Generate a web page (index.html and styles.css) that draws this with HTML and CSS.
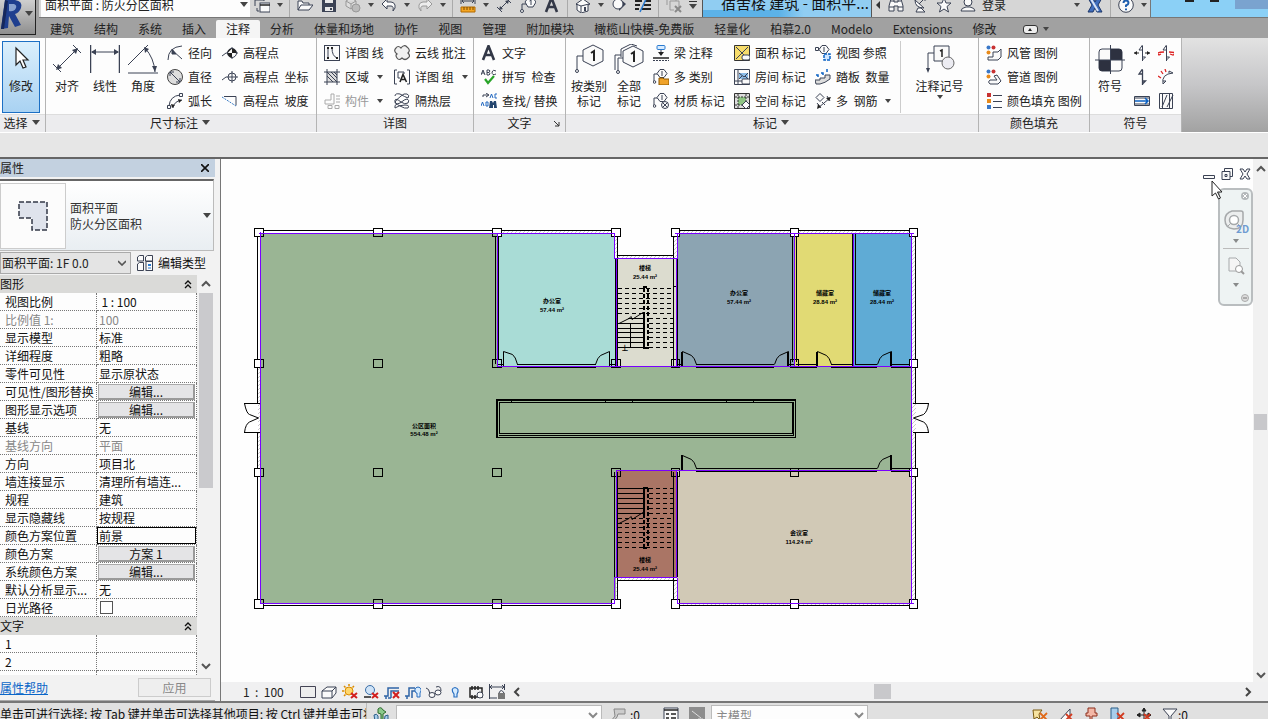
FILE: index.html
```
<!DOCTYPE html>
<html lang="zh-CN">
<head>
<meta charset="utf-8">
<title>面积平面</title>
<link rel="stylesheet" href="styles.css">
</head>
<body>
<svg class="defs" aria-hidden="true">
  <symbol id="i-switch" viewBox="0 0 16 16"><path d="M1 9V1h9v3M1 3h9M3 11v3h2" class="k"/><rect x="6" y="6" width="10" height="9" class="w"/><path d="M6 8h10" class="k2"/></symbol>
  <symbol id="i-open" viewBox="0 0 16 16"><path d="M1 13V4h4l1 2h6v2M1 13l3-5h12l-4 5z" class="w"/></symbol>
  <symbol id="i-save" viewBox="0 0 16 16"><path d="M1 1h12l2 2v12H1z" fill="#3b4254"/><path d="M4 1h8v5H4zM4 10h8v4H4z" fill="#e8e8e8"/><path d="M9 11h2v2H9z" fill="#3b4254"/></symbol>
  <symbol id="i-cube" viewBox="0 0 16 16"><path d="M1 4l5-3 5 3v5l-5 3-5-3zM1 4l5 3 5-3M6 7v5" fill="#ddd" stroke="#999"/><circle cx="11" cy="11" r="4" fill="#bbb" stroke="#999"/></symbol>
  <symbol id="i-undo" viewBox="0 0 16 16"><path d="M6 2L1 7l5 5V9h4q3 0 2 5 3-3 2-6-1-3-4-3H6z" class="w"/></symbol>
  <symbol id="i-redo" viewBox="0 0 16 16"><path d="M10 2l5 5-5 5V9H6q-3 0-2 5-3-3-2-6 1-3 4-3h4z" fill="#eee" stroke="#999"/></symbol>
  <symbol id="i-ruler" viewBox="0 0 16 16"><path d="M1 1v6M15 1v6M2 4h12M4 2L2 4l2 2M12 2l2 2-2 2" class="k"/><path d="M1 10h14v5H1z" fill="#f5a623" stroke="#b36b00"/><path d="M4 10v3M7 10v3M10 10v3M13 10v3" stroke="#7a4a00"/></symbol>
  <symbol id="i-diag" viewBox="0 0 16 16"><path d="M3 13L13 3M1 10l5 5M10 1l5 5" class="k"/><path d="M3 13l1-4 3 3zM13 3l-4 1 3 3z" fill="#3b4254"/></symbol>
  <symbol id="i-tag" viewBox="0 0 16 16"><path d="M2 14V7h4" class="k"/><circle cx="2" cy="14" r="1.5" class="w"/><path d="M8 1h5l3 4-3 5H8L5 5z" class="w"/><path d="M9.500 4l1.500-1v5" class="k"/></symbol>
  <symbol id="i-house" viewBox="0 0 16 16"><path d="M1 7l7-5 7 5-2 1v6l-7 2-4-3V8z" class="w"/><path d="M1 7l5 2 8-2M6 9v6" class="k"/><path d="M9 10h2v4H9z" fill="#3b4254"/></symbol>
  <symbol id="i-sect" viewBox="0 0 16 16"><path d="M8 1l7 6-7 7z" fill="#3b4254"/><circle cx="7" cy="7" r="5" class="w"/></symbol>
  <symbol id="i-lines" viewBox="0 0 16 16"><path d="M0 4h7M10 4h6M0 8h5M9 8h7M0 12h4M7 12h9" stroke="#222" stroke-width="2"/><path d="M12 0L5 15" stroke="#2a7bd0" stroke-width="1.500"/></symbol>
  <symbol id="i-closew" viewBox="0 0 16 16"><path d="M1 8V1h9v3M4 4h9v6M4 4v9h4" fill="none" stroke="#999"/><path d="M9 9l6 6M15 9l-6 6" stroke="#888" stroke-width="2"/></symbol>
  <symbol id="i-bino" viewBox="0 0 16 16"><path d="M3 2h3v3h4V2h3l2 7v5h-5V9H6v5H1V9z" class="w"/><path d="M3 4h3M10 4h3M1 10h5M10 10h5" class="k"/></symbol>
  <symbol id="i-dish" viewBox="0 0 16 16"><path d="M3 3q0 8 9 8zM7 7l5-5M4 15h9l-4-4-3 0z" class="w"/><circle cx="13" cy="2" r="1.500" fill="#3b4254"/></symbol>
  <symbol id="i-star" viewBox="0 0 16 16"><path d="M8 1l2 5h5l-4 3.500 1.500 5.500L8 12l-4.500 3L5 9.500 1 6h5z" class="w"/></symbol>
  <symbol id="i-user" viewBox="0 0 16 16"><circle cx="8" cy="5" r="4" class="w"/><path d="M1 14q0-3 5-4h4q5 1 5 4z" class="w"/></symbol>
  <symbol id="i-x" viewBox="0 0 16 16"><path d="M1 1h5l2 4 2-4h5l-4 7 4 7h-5l-2-4-2 4H1l4-7z" fill="#3f6dbd" stroke="#1d3769"/><path d="M4 2l7 12" stroke="#d7e3f6" stroke-width="2"/></symbol>
  <symbol id="i-help" viewBox="0 0 16 16"><circle cx="8" cy="8" r="7.300" class="w"/><path d="M5.500 6q0-2.500 2.500-2.500T10.500 6Q10.500 7.500 8 8.500V10M8 11.500v1.700" fill="none" stroke="#1f5fae" stroke-width="2"/></symbol>
  <symbol id="i-a" viewBox="0 0 16 16"><path d="M2 15L7.500 1 13 15M4 10h7" fill="none" stroke="#333847" stroke-width="2.600"/></symbol>
  <symbol id="b-cursor" viewBox="0 0 30 30"><path d="M10 4v17l4-4 3 7 3-1-3-7h5z" fill="#fff" stroke="#222" stroke-width="1.200"/></symbol>
  <symbol id="b-align" viewBox="0 0 30 30"><path d="M5 25L25 5M1 20l8 8M21 1l8 8" class="k"/><path d="M4 26l2-6 4 4zM26 4l-6 2 4 4z" fill="#3b4254"/></symbol>
  <symbol id="b-linear" viewBox="0 0 30 30"><path d="M0.500 1v28M29.500 1v28" stroke="#3b4254" stroke-width="1.500"/><path d="M2 8h26" class="k"/><path d="M1 8l5-3v6zM29 8l-5-3v6z" fill="#3b4254"/></symbol>
  <symbol id="b-angle" viewBox="0 0 30 30"><path d="M0 21L20 1M0 29h30M17 4q9 10 10 24" class="k"/><path d="M16 3l5 2-4 4zM27 28l-3-6h5z" fill="#3b4254"/></symbol>
  <symbol id="b-tag" viewBox="0 0 30 30"><path d="M3 27V12h7" class="k"/><circle cx="3" cy="27" r="1.500" class="w"/><path d="M19 1l10 5v11l-10 5-10-5V6z" class="w"/><path d="M17 9l3-2v10" stroke="#222" stroke-width="2" fill="none"/></symbol>
  <symbol id="b-tags" viewBox="0 0 30 30"><path d="M1 26V11h6M7 13V5L17 0l6 2" class="k"/><path d="M4 28V14h6" class="k"/><circle cx="4" cy="28" r="1.500" class="w"/><path d="M19 2l10 5v11l-10 5-10-5V7z" class="w"/><path d="M17 10l3-2v10" stroke="#222" stroke-width="2" fill="none"/></symbol>
  <symbol id="b-keynote" viewBox="0 0 30 30"><path d="M3 26V9h6" class="k"/><path d="M3 29l-2-5h4z" fill="#3b4254"/><path d="M9 2h15v15H9z" class="w"/><path d="M15 7l2-1v7" fill="none" stroke="#222" stroke-width="1.500"/><circle cx="23" cy="19" r="6" fill="#ececf2" stroke="#666"/></symbol>
  <symbol id="b-symbol" viewBox="0 0 30 30"><rect x="4" y="5" width="23" height="22" rx="3" class="w"/><path d="M15.500 5H24q3 0 3 3v8H15.500zM4 16h11.500v11H7q-3 0-3-3z" fill="#2d3140"/><path d="M0 16h30M15.500 1v30" class="k"/></symbol>
  <symbol id="s-rad" viewBox="0 0 16 16"><path d="M1 15Q1 2 15 1" class="k"/><path d="M6 6l9 8M5 4v5h4z" fill="#3b4254" stroke="#3b4254"/></symbol>
  <symbol id="s-dia" viewBox="0 0 16 16"><circle cx="8" cy="8" r="7.500" fill="#ddd" stroke="#444"/><path d="M3 3l10 10M3 7V3h4M13 9v4H9" class="k"/></symbol>
  <symbol id="s-arc" viewBox="0 0 16 16"><path d="M2 13Q3 3 13 2M6 15q1-7 9-8" class="k"/><path d="M5 15l-1-4 4 1zM15 7l-4-1 1 4z" fill="#222"/><path d="M.5 12.500h3v3h-3zM12.500.5h3v3h-3z" class="w"/></symbol>
  <symbol id="s-spot" viewBox="0 0 16 16"><path d="M0 11l4-3h12M10 2v12" class="k"/><circle cx="10" cy="8" r="4.500" class="w"/><path d="M10 3.500A4.500 4.500 0 0 1 14.500 8H10zM10 12.500A4.500 4.500 0 0 1 5.500 8H10zM10 3.500A4.500 4.500 0 0 0 5.500 8z" fill="#222"/></symbol>
  <symbol id="s-spotc" viewBox="0 0 16 16"><circle cx="10" cy="8" r="4" class="w"/><path d="M0 11l4-3h12M10 2v12" class="k"/></symbol>
  <symbol id="s-slope" viewBox="0 0 16 16"><path d="M2 3.500h12v9" class="k"/><path d="M0 4l14 9" stroke="#3b7cc4" stroke-dasharray="2 1"/></symbol>
  <symbol id="s-detl" viewBox="0 0 16 16"><rect x=".5" y=".5" width="15" height="15" class="w"/><path d="M4 3v10M8 3q0 8 5 10" class="k"/><path d="M3 2h2v2H3zM3 12h2v2H3zM7 2h2v2H7zM12 12h2v2h-2z" fill="#222"/></symbol>
  <symbol id="s-region" viewBox="0 0 16 16"><path d="M3 3h10v10H3z" fill="#ddd"/><path d="M0 3h16M0 13h16M3 0v16M13 0v16M3 7l6 6M3 3l10 10M7 3l6 6M10 3l3 3" class="k"/></symbol>
  <symbol id="s-comp" viewBox="0 0 16 16"><path d="M7 1v6H1v4h9V1zM12 3h4M12 6h4M12 9h4M4 12.500h4v3H4zM11 12.500h4v3h-4z" fill="none" stroke="#aaa"/></symbol>
  <symbol id="s-cloud" viewBox="0 0 16 16"><path d="M3 9Q-1 6 2 3 4 0 7 3q3-4 6-1 4 3 1 6 3 3 0 5-3 3-6 0-3 3-5 0-2-3 0-4z" fill="#f0f0f0" stroke="#555" stroke-width="1.200"/></symbol>
  <symbol id="s-group" viewBox="0 0 16 16"><path d="M3 1H.5v14H3M13 1h2.500v14H13M10 5V3H4v6h2" class="k"/><path d="M6 13l3-7.500 3.500 7.500M7 10.500h4.500" fill="none" stroke="#222" stroke-width="1.600"/></symbol>
  <symbol id="s-insul" viewBox="0 0 16 16"><path d="M1 3q0-3 5-2 5 3 8 4 2-3-1-4-3-1-6 2-5 4-6 6 0 3 5 1 5-4 7-4 3 1 1 4-3 2-7-1-5-4-6-2-1 3 5 6 5 3 8 2 2-3-3-3-6 0-10 3-1-3 2-4" class="k"/></symbol>
  <symbol id="s-beam" viewBox="0 0 16 16"><rect x="4" y=".5" width="8" height="4" rx="1" fill="#d9ecff" stroke="#2a7bd0"/><path d="M8 5v5" class="k"/><path d="M5 7h6l-3 4z" fill="#222"/><path d="M0 13h16" class="k2"/><path d="M0 15.500h16" class="k" stroke-dasharray="2 1"/></symbol>
  <symbol id="s-multi" viewBox="0 0 16 16"><path d="M1 12V5h4" class="k"/><circle cx="1.500" cy="13" r="1.300" class="w"/><path d="M7 .5h4l3 4-3 4H7l-3-4z" class="w"/><path d="M9 2v5" class="k"/><path d="M6 9h4l1 1h5v6H6z" fill="#f0a32a" stroke="#8a5600"/></symbol>
  <symbol id="s-mat" viewBox="0 0 16 16"><path d="M1 12V5h4" class="k"/><circle cx="1.500" cy="13" r="1.300" class="w"/><path d="M7 .5h4l3 4-3 4H7l-3-4z" class="w"/><path d="M9 2v5" class="k"/><circle cx="12" cy="12" r="3.500" class="w"/><path d="M9.500 14.500l5-5M9.500 9.500l5 5" class="k"/></symbol>
  <symbol id="s-area" viewBox="0 0 16 16"><path d="M.5.5h15v15H.5z" fill="#f7dc6a" stroke="#333"/><path d="M2 2l12 12M14 2L2 14" class="k"/><rect x="8" y="10" width="8" height="5" rx="2" class="w"/></symbol>
  <symbol id="s-room" viewBox="0 0 16 16"><path d="M.5.5h15v15H.5zM4 1v14M1 12h8" class="w"/><path d="M5 4h9v6H5z" fill="#8cbce8"/><path d="M5 4l5 4 4-4M5 10l3-3M14 10l-3-3" class="k"/><rect x="8" y="10" width="8" height="5" rx="1" class="w"/></symbol>
  <symbol id="s-space" viewBox="0 0 16 16"><path d="M.5.5h15v15H.5z" fill="#ddd" stroke="#333"/><path d="M4 4h8v8H4z" fill="#8fc584"/><path d="M4 1v14M12 1v14M1 4h14M1 12h14" stroke="#333" stroke-dasharray="2 1"/><path d="M12 8l4 4-4 4-4-4z" class="w"/></symbol>
  <symbol id="s-vref" viewBox="0 0 16 16"><path d="M0 4h5" class="k"/><path d="M.5 2.500h3v3h-3z" class="w"/><path d="M7 .5h4l3 4-3 4H7l-3-4z" class="w"/><path d="M9 2v5" class="k"/><path d="M9 9h6v6H9z" fill="#cfe6ff" stroke="#0b62c4" stroke-width="1.500" stroke-dasharray="3 1"/></symbol>
  <symbol id="s-tread" viewBox="0 0 16 16"><path d="M0 11h5V9h5V6h5v4q-5 4-10 5H1z" fill="#ddd" stroke="#3b4254"/><path d="M1 6h2v2M6 4h2v2M12 0v3" fill="none" stroke="#0b62c4" stroke-width="1.500"/></symbol>
  <symbol id="s-rebar" viewBox="0 0 16 16"><path d="M5 .5l4 4-4 4-4-4z" class="w"/><path d="M3 15L15 5M2 10l4 5M12 3l3 5M7 9l3 3" class="k"/><path d="M2 16l1-5 3 3zM16 4l-5 1 3 3z" fill="#222"/></symbol>
  <symbol id="s-duct" viewBox="0 0 16 16"><circle cx="2.500" cy="2.500" r="2" fill="#3a78c8"/><circle cx="7.500" cy="2.500" r="2" fill="#c83232"/><circle cx="2.500" cy="7.500" r="2" fill="#e88a1a"/><path d="M7 7h5l3-3v8l-3 3H2v-3h5z" class="w"/></symbol>
  <symbol id="s-pipe" viewBox="0 0 16 16"><circle cx="2.500" cy="2.500" r="2" fill="#3a78c8"/><circle cx="7.500" cy="2.500" r="2" fill="#c83232"/><circle cx="2.500" cy="7.500" r="2" fill="#e88a1a"/><path d="M4 11h7l-3-4 3-1 4 6-3 3H4q-3-2 0-4z" class="w"/></symbol>
  <symbol id="s-fill" viewBox="0 0 16 16"><path d="M1 0h4v4H1z" fill="#c83232"/><path d="M1 6h4v4H1z" fill="#e88a1a"/><path d="M1 12h4v4H1z" fill="#3a78c8"/><path d="M7 2.500h9M7 8.500h9M7 14.500h9" class="k"/></symbol>
  <symbol id="y-1" viewBox="0 0 16 16"><path d="M8.500 16V1M8.500 0L5 5h3M8.500 15l3-3H9" class="k"/><path d="M0 8h5M11 8h5" stroke="#222"/><path d="M0 8l3-2v4zM16 8l-3-2v4z" fill="#222"/></symbol>
  <symbol id="y-2" viewBox="0 0 16 16"><path d="M8.500 16V1M8.500 0L5 5h3M8.500 15l3-3H9" class="k"/><path d="M6 7q-9 0-5 3l2-1M11 7q9 0 4 3l-3-1" fill="none" stroke="#d22" stroke-width="1.300"/></symbol>
  <symbol id="y-3" viewBox="0 0 16 16"><path d="M8.500 16V1M8.500 0L5 5h3M8.500 15l3-3H9" class="k" stroke-width="1.300"/></symbol>
  <symbol id="y-4" viewBox="0 0 16 16"><path d="M5 15q-2-10 10-11l-4-2v2M5 15l3-3H5" class="k"/><path d="M0 7l3 2M3 2l2 3M7 0l1 3" stroke="#d22" stroke-width="1.300"/></symbol>
  <symbol id="y-5" viewBox="0 0 16 16"><path d="M.5 3.500h15v9H.5zM4 3v3M8 3v3M12 3v3M4 10v3M8 10v3M12 10v3M2 3v3M6 3v3M10 3v3M14 3v3M2 10v3M6 10v3M10 10v3M14 10v3" class="w"/><path d="M1 8h12M11 5l3 3-3 3" stroke="#0b62c4" fill="none" stroke-width="1.500"/></symbol>
  <symbol id="y-6" viewBox="0 0 16 16"><path d="M1.500.5h13v15h-13zM4.500 1v14M11.500 1v14M4 14l5-12M9 14l6-12" class="w"/></symbol>
  <symbol id="i-etype" viewBox="0 0 16 16"><path d="M.5 2l2-1.500h4V6h-6zM8.500 2l2-1.500h5V6h-7zM.5 9l2-1.500h4v8h-6z" class="w"/><rect x="9" y="6.500" width="6.500" height="9" class="w"/><path d="M11 9h3v2h-3z" fill="#2a7bd0"/><path d="M11 13h3" stroke="#2a7bd0"/></symbol>
  <symbol id="v-1" viewBox="0 0 16 16"><path d="M.5 2.500h15v11H.5z" fill="#eee" stroke="#445"/></symbol>
  <symbol id="v-2" viewBox="0 0 16 16"><path d="M1 7l5-4h9v6l-4 5H1zM1 7h10v7M11 7l4-4" class="w"/></symbol>
  <symbol id="v-sun" viewBox="0 0 16 16"><circle cx="7" cy="7" r="4" fill="#ffd76b" stroke="#d98b00"/><path d="M7 0v2M0 7h2M2 2l1.500 1.500M12 2l-1.500 1.500M2 12l1.500-1.500" stroke="#d98b00" stroke-width="1.500"/><path d="M9 9l6 5M15 9l-6 5" stroke="#d21f1f" stroke-width="2"/></symbol>
  <symbol id="v-shad" viewBox="0 0 16 16"><circle cx="7" cy="6" r="4.500" fill="#cfe3f7" stroke="#3a6ea8"/><path d="M1 13h7" class="k2"/><path d="M9 9l6 5M15 9l-6 5" stroke="#d21f1f" stroke-width="2"/></symbol>
  <symbol id="v-crop" viewBox="0 0 16 16"><path d="M0 12h4V4h11M2 15v-3M7 14V7h8M4 14h3" fill="none" stroke="#2f64a6" stroke-width="1.500"/><path d="M9 8l6 6M15 8l-6 6" stroke="#d21f1f" stroke-width="2"/></symbol>
  <symbol id="v-cropb" viewBox="0 0 16 16"><path d="M0 12h4V4h6M2 15v-3M7 14V7h3" fill="none" stroke="#2f64a6" stroke-width="1.500"/><path d="M11 9q-3-5 2-6 5 1 2 6v4h-3V9z" fill="#d7ecff" stroke="#2a6fc0"/></symbol>
  <symbol id="v-glass" viewBox="0 0 16 16"><path d="M0 4q3 0 4 6M10 3q5-2 5 4" class="k"/><ellipse cx="6" cy="11" rx="3" ry="2.500" class="w"/><ellipse cx="12" cy="8.500" rx="3" ry="2.500" class="w"/></symbol>
  <symbol id="v-bulb" viewBox="0 0 16 16"><path d="M7 10Q3 4.500 8 3.500q5 1 2 6.500v3H7z" fill="#d7ecff" stroke="#2a6fc0" stroke-width="1.200"/></symbol>
  <symbol id="v-film" viewBox="0 0 16 16"><path d="M2 4h12v9H2zM4 2v4M7 2v4M10 2v4M4 11v4M7 11v4" class="k2"/><circle cx="12" cy="11" r="3" class="w"/></symbol>
  <symbol id="v-lock" viewBox="0 0 16 16"><path d="M.5 0v15M15.500 0v6M1 3h14M3 1L1 3l2 2M13 1l2 2-2 2M1 14h7" class="k"/><rect x="9" y="9" width="7" height="6" fill="#777"/><path d="M10 9q2-5 5 0" class="k"/></symbol>
  <symbol id="t-ws" viewBox="0 0 16 16"><path d="M5 2q3-3 5 1l3 2-3 2v6H8V7L5 6z" fill="#8bc98b" stroke="#2d6b2d"/><path d="M1 8q3-2 4 1v5H2zM12 9l3-1v4l-2 4h-2z" fill="#a8cdea" stroke="#2b5e88"/></symbol>
  <symbol id="t-brush" viewBox="0 0 16 16"><path d="M4 2h11v5H8l-1 3-4 5-2-1 4-5z" fill="#ccc" stroke="#888"/></symbol>
  <symbol id="t-list" viewBox="0 0 16 16"><path d="M1 1h14v14H1z" class="w"/><path d="M1 3h14M3 7h3M8 7h5M3 11h3M8 11h5" class="k2"/></symbol>
  <symbol id="t-img" viewBox="0 0 16 16"><path d="M0 0h16v16H0z" fill="#8d8d8d"/><path d="M3 4l9 7M9 12h5" stroke="#ddd"/></symbol>
  <symbol id="t-sel1" viewBox="0 0 16 16"><path d="M1 3h9l-3 4 1 6-3-3-3 2z" fill="#f6e3a0" stroke="#7a5a10"/><path d="M8 6l7 7M15 6l-7 7" stroke="#e06a1a" stroke-width="1.800"/></symbol>
  <symbol id="t-sel2" viewBox="0 0 16 16"><path d="M1 14L12 2v6l-4 6z" class="w"/><path d="M8 7l6 6M14 7l-6 6" stroke="#d23a1f" stroke-width="1.800"/></symbol>
  <symbol id="t-sel3" viewBox="0 0 16 16"><path d="M4 1h7v5h2v3H8v4H6V9H2V6h2z" fill="#f3b7a6" stroke="#8d2f1c"/><path d="M2 14h12" class="k2"/></symbol>
  <symbol id="t-sel4" viewBox="0 0 16 16"><path d="M1 1h7v13H1z" fill="#a8cdea" stroke="#2b5e88"/><path d="M7 6l7 7M14 6l-7 7" stroke="#d23a1f" stroke-width="1.800"/></symbol>
  <symbol id="t-sel5" viewBox="0 0 16 16"><path d="M8 1v13M1 8h14M8 1L6 4h4zM1 8l3-2v4zM15 8l-3-2v4z" fill="#222" stroke="#222"/><path d="M8 7l6 6M14 7l-6 6" stroke="#d23a1f" stroke-width="1.800"/></symbol>
  <symbol id="t-funnel" viewBox="0 0 16 16"><path d="M1 2h14L9 9v6H7V9z" class="w"/></symbol>
  <symbol id="chev" viewBox="0 0 10 10"><path d="M2 5l3-3 3 3M2 9l3-3 3 3" fill="none" stroke="#111" stroke-width="1.300"/></symbol>
  <symbol id="up" viewBox="0 0 10 10"><path d="M1 7l4-4 4 4" fill="none" stroke="#555" stroke-width="2"/></symbol>
  <symbol id="down" viewBox="0 0 10 10"><path d="M1 3l4 4 4-4" fill="none" stroke="#555" stroke-width="2"/></symbol>
  <symbol id="left" viewBox="0 0 10 10"><path d="M7 1L3 5l4 4" fill="none" stroke="#444" stroke-width="2"/></symbol>
  <symbol id="right" viewBox="0 0 10 10"><path d="M3 1l4 4-4 4" fill="none" stroke="#444" stroke-width="2"/></symbol>
</svg>

<div class="app">
  <header class="top">
    <button class="appbtn" aria-label="应用程序菜单"><svg viewBox="0 0 24 34" class="logo"><path d="M5 3h10q8 1 6 8-2 5-6 6l6 11-6 2-6-11-1 12-7 1z" fill="#1f3f8f"/><path d="M9 7h5q3 1 2 4-2 4-7 3z" fill="#8aa3cf"/><path d="M5 3l-4 29 3 0L8 4z" fill="#16285c"/></svg><i class="car"></i></button>
    <div class="qat">
      <div class="pick"><input aria-label="当前视图" value="面积平面 : 防火分区面积"><i class="car"></i></div>
      <button class="ic" aria-label="切换窗口"><svg><use href="#i-switch"/></svg></button><i class="car"></i><i class="sep"></i>
      <button class="ic" aria-label="打开"><svg><use href="#i-open"/></svg></button>
      <button class="ic" aria-label="保存"><svg><use href="#i-save"/></svg></button>
      <button class="ic" aria-label="同步"><svg><use href="#i-cube"/></svg></button><i class="car"></i>
      <button class="ic" aria-label="放弃"><svg><use href="#i-undo"/></svg></button><i class="car"></i>
      <button class="ic" aria-label="重做"><svg><use href="#i-redo"/></svg></button><i class="car"></i><i class="sep"></i>
      <button class="ic" aria-label="测量"><svg><use href="#i-ruler"/></svg></button><i class="car"></i>
      <button class="ic" aria-label="对齐尺寸"><svg><use href="#i-diag"/></svg></button>
      <button class="ic" aria-label="按类别标记"><svg><use href="#i-tag"/></svg></button>
      <button class="ic" aria-label="文字"><svg><use href="#i-a"/></svg></button><i class="sep"></i>
      <button class="ic" aria-label="三维视图"><svg><use href="#i-house"/></svg></button><i class="car"></i>
      <button class="ic" aria-label="剖面"><svg><use href="#i-sect"/></svg></button>
      <button class="ic" aria-label="细线"><svg><use href="#i-lines"/></svg></button><i class="sep"></i>
      <button class="ic" aria-label="关闭隐藏窗口"><svg><use href="#i-closew"/></svg></button><i class="car bar"></i>
      <div class="title">宿舍楼 建筑 - 面积平...</div>
      <div class="info">
        <i class="car lt"></i>
        <button class="ic" aria-label="搜索"><svg><use href="#i-bino"/></svg></button>
        <button class="ic" aria-label="通讯中心"><svg><use href="#i-dish"/></svg></button>
        <button class="ic" aria-label="收藏夹"><svg><use href="#i-star"/></svg></button>
        <button class="ic" aria-label="用户"><svg><use href="#i-user"/></svg></button>
        <button class="login">登录</button><i class="car"></i>
        <button class="ic" aria-label="Exchange"><svg><use href="#i-x"/></svg></button><i class="sep"></i>
        <button class="ic" aria-label="帮助"><svg><use href="#i-help"/></svg></button><i class="car"></i>
      </div>
      <div class="wctl"><i></i><i></i><b></b></div>
    </div>
    <nav class="tabs">
      <button>建筑</button><button>结构</button><button>系统</button><button>插入</button><button class="on">注释</button><button>分析</button><button>体量和场地</button><button>协作</button><button>视图</button><button>管理</button><button>附加模块</button><button>橄榄山快模-免费版</button><button>轻量化</button><button>柏慕2.0</button><button>Modelo</button><button>Extensions</button><button>修改</button>
      <button class="mini" aria-label="最小化功能区"><span></span><i class="car"></i></button>
    </nav>
  </header>

  <section class="ribbon">
    <div class="panel p-sel">
      <div class="body"><button class="big on"><svg><use href="#b-cursor"/></svg>修改</button></div>
      <h2>选择<i class="car"></i></h2>
    </div>
    <div class="panel p-dim">
      <div class="body">
        <button class="big"><svg><use href="#b-align"/></svg>对齐</button><button class="big"><svg><use href="#b-linear"/></svg>线性</button><button class="big"><svg><use href="#b-angle"/></svg>角度</button>
        <div class="col"><button><svg><use href="#s-rad"/></svg>径向</button><button><svg><use href="#s-dia"/></svg>直径</button><button><svg><use href="#s-arc"/></svg>弧长</button></div>
        <div class="col"><button><svg><use href="#s-spot"/></svg>高程点</button><button><svg><use href="#s-spotc"/></svg>高程点&nbsp; 坐标</button><button><svg><use href="#s-slope"/></svg>高程点&nbsp; 坡度</button></div>
      </div>
      <h2>尺寸标注<i class="car"></i></h2>
    </div>
    <div class="panel p-det">
      <div class="body">
        <div class="col"><button><svg><use href="#s-detl"/></svg>详图 线</button><button><svg><use href="#s-region"/></svg>区域<i class="car"></i></button><button class="off"><svg><use href="#s-comp"/></svg>构件<i class="car"></i></button></div>
        <div class="col"><button><svg><use href="#s-cloud"/></svg>云线 批注</button><button><svg><use href="#s-group"/></svg>详图 组<i class="car"></i></button><button><svg><use href="#s-insul"/></svg>隔热层</button></div>
      </div>
      <h2>详图</h2>
    </div>
    <div class="panel p-txt">
      <div class="body">
        <div class="col">
          <button><svg><use href="#i-a"/></svg>文字</button>
          <button><svg viewBox="0 0 16 16"><path d="M4 10l3 4 6-7" fill="none" stroke="#28a428" stroke-width="2.200"/><path d="M0 6l2-5 2 5M1 4h2M6 1v5h2q2-1 0-2.500H6 8Q10 1.500 8 1H6M15 2q-3-2-4 1 0 4 4 2" class="k"/></svg>拼写&nbsp; 检查</button>
          <button><svg viewBox="0 0 16 16"><path d="M2 4V2h5M5 0l3 2-3 2" class="k"/><path d="M9 5l1.500-4L12 5M16 1h-2v4h2M0 13l1.500-4L3 13M5 9v4h2V9z" fill="none" stroke="#2268c0"/><path d="M9 8h2l1 2 1-2h2l1 7h-3v-3h-1v3H8z" fill="#24456e"/></svg>查找/ 替换</button>
        </div>
      </div>
      <h2>文字<svg class="launch" viewBox="0 0 6 6"><path d="M0 0l5 5M5 1v4H1" fill="none" stroke="#333"/></svg></h2>
    </div>
    <div class="panel p-tag">
      <div class="body">
        <button class="big"><svg><use href="#b-tag"/></svg>按类别<br>标记</button><button class="big"><svg><use href="#b-tags"/></svg>全部<br>标记</button>
        <div class="col"><button><svg><use href="#s-beam"/></svg>梁 注释</button><button><svg><use href="#s-multi"/></svg>多 类别</button><button><svg><use href="#s-mat"/></svg>材质 标记</button></div>
        <div class="col"><button><svg><use href="#s-area"/></svg>面积 标记</button><button><svg><use href="#s-room"/></svg>房间 标记</button><button><svg><use href="#s-space"/></svg>空间 标记</button></div>
        <div class="col"><button><svg><use href="#s-vref"/></svg>视图 参照</button><button><svg><use href="#s-tread"/></svg>踏板&nbsp; 数量</button><button><svg><use href="#s-rebar"/></svg>多&nbsp; 钢筋<i class="car"></i></button></div>
        <button class="big note"><svg><use href="#b-keynote"/></svg>注释记号<i class="car"></i></button>
      </div>
      <h2>标记<i class="car"></i></h2>
    </div>
    <div class="panel p-col">
      <div class="body">
        <div class="col"><button><svg><use href="#s-duct"/></svg>风管 图例</button><button><svg><use href="#s-pipe"/></svg>管道 图例</button><button><svg><use href="#s-fill"/></svg>颜色填充 图例</button></div>
      </div>
      <h2>颜色填充</h2>
    </div>
    <div class="panel p-sym">
      <div class="body">
        <button class="big"><svg><use href="#b-symbol"/></svg>符号</button>
        <div class="col"><button aria-label="跨方向"><svg><use href="#y-1"/></svg></button><button aria-label="梁"><svg><use href="#y-3"/></svg></button><button aria-label="楼梯路径"><svg><use href="#y-5"/></svg></button></div>
        <div class="col"><button aria-label="钢筋"><svg><use href="#y-2"/></svg></button><button aria-label="路径"><svg><use href="#y-4"/></svg></button><button aria-label="区域"><svg><use href="#y-6"/></svg></button></div>
      </div>
      <h2>符号</h2>
    </div>
  </section>
  <div class="options"></div>

  <main class="work">
    <aside class="props">
      <div class="phead"><span>属性</span><button aria-label="关闭"><svg viewBox="0 0 8 8"><path d="M0 0l8 8M8 0L0 8" stroke="#111" stroke-width="1.600"/></svg></button></div>
      <button class="type">
        <span class="thumb"><svg viewBox="0 0 30 30"><path d="M1 1h28v28H14V17H1z" fill="#dfe3ec" stroke="#333847" stroke-width="1.500" stroke-dasharray="5 2"/></svg></span>
        <span class="tname">面积平面<br>防火分区面积</span><i class="car"></i>
      </button>
      <div class="inst">
        <select aria-label="实例"><option>面积平面: 1F 0.0</option></select>
        <button class="etype"><svg><use href="#i-etype"/></svg>编辑类型</button>
      </div>
      <div class="plist">
        <div class="ptab">
          <h3>图形<svg><use href="#chev"/></svg></h3>
          <table>
            <tr><th>视图比例</th><td>&#8201;1 : 100</td></tr>
            <tr class="off"><th>比例值 1:</th><td>100</td></tr>
            <tr><th>显示模型</th><td>标准</td></tr>
            <tr><th>详细程度</th><td>粗略</td></tr>
            <tr><th>零件可见性</th><td>显示原状态</td></tr>
            <tr><th>可见性/图形替换</th><td><button>编辑...</button></td></tr>
            <tr><th>图形显示选项</th><td><button>编辑...</button></td></tr>
            <tr><th>基线</th><td>无</td></tr>
            <tr class="off"><th>基线方向</th><td>平面</td></tr>
            <tr><th>方向</th><td>项目北</td></tr>
            <tr><th>墙连接显示</th><td>清理所有墙连...</td></tr>
            <tr><th>规程</th><td>建筑</td></tr>
            <tr><th>显示隐藏线</th><td>按规程</td></tr>
            <tr><th>颜色方案位置</th><td><input type="text" aria-label="颜色方案位置" value="前景"></td></tr>
            <tr><th>颜色方案</th><td><button>方案 1</button></td></tr>
            <tr><th>系统颜色方案</th><td><button>编辑...</button></td></tr>
            <tr><th>默认分析显示...</th><td>无</td></tr>
            <tr><th><label for="sunpath">日光路径</label></th><td><input type="checkbox" id="sunpath"></td></tr>
          </table>
          <h3>文字<svg><use href="#chev"/></svg></h3>
          <table><tr><th>1</th><td></td></tr><tr><th>2</th><td></td></tr><tr><th>3</th><td></td></tr></table>
        </div>
        <div class="vbar"><svg><use href="#up"/></svg><i class="half"></i><b></b><svg><use href="#down"/></svg></div>
      </div>
      <div class="pfoot"><a href="#help">属性帮助</a><button disabled>应用</button></div>
    </aside>

    <section class="view">
      <div class="canvas">
        <svg class="plan" viewBox="221 159 720 470" role="img" aria-label="防火分区面积平面">
          <defs><pattern id="hatch" width="4" height="4" patternUnits="userSpaceOnUse"><path d="M0 4L4 0" stroke="#bbb" stroke-width=".8"/></pattern></defs>
          <g fill="url(#hatch)">
            <path d="M677 231h238v3H677zM912 231h4v375h-4zM677 603h238v3H677zM614 234h4v22h-4zM674 234h4v22h-4zM617 256h60v3h-60zM617 577h58v4h-58zM614 580h4v20h-4zM674 580h4v20h-4zM258 366h3v105h-3zM498 231h118v3H498z"/>
          </g>
          <path d="M261 234h237v132h414v105H616v132H261z" fill="#9ab594"/>
          <path d="M498 234h117v24h1v108H498z" fill="#a9dcd6"/>
          <path d="M617 259h60v107h-60z" fill="#dcdccf"/>
          <path d="M677 234h117v132H677z" fill="#8ca4b2"/>
          <path d="M795 234h58v132h-58z" fill="#e1da74"/>
          <path d="M854 234h58v132h-58z" fill="#5fabd5"/>
          <path d="M617 471h59v106h-59z" fill="#aa7565"/>
          <path d="M677 471h235v132H677z" fill="#d1c9b6"/>
          <g fill="none" stroke="#000" shape-rendering="crispEdges">
            <path d="M257.500 230.500H617.500V366M257.500 230.500V404M257.500 432V605.500H617.500V472M617.500 255.500H673.500M673.500 366V230.500H915.500V404M915.500 432V605.500H675M617.500 580.500H677M673.500 605V472M677.500 472V577M615.500 258V366M615 286.500h3M674 286.500h4M677.500 256V366M614.500 472V577"/>
            <path d="M495.500 234V364M498.500 234V360M792.500 236V362M796.500 236V362M852.500 234V366M855.500 234V364"/>
            <path d="M517 364.500h79M517 367.500h79M696 364.500h78M696 367.500h78M796 364.500h21M831 364.500h22M855 364.500h22M891 364.500h20M797 367.500h20M831 367.500h46M891 367.500h20M498 364.500h5M609 364.500h8M676 364.500h6M788 364.500h6M696 468.500h181M696 471.500h181M891 468.500h20M891 471.500h20"/>
            <path d="M496.500 399.500H795.500V437.500H496.500zM497.500 400.500H794.500M497.500 400V437M499.500 402.500H792.500V433.500H499.500zM793.500 402V435M499 435.500H794M511.500 400v2M605.500 400v2M632.500 400v2M726.500 400v2M753.500 400v2"/>
            <path d="M244 403.500h16M244 432.500h16M913 403.500h16M913 432.500h16"/>
          </g>
          <path d="M244.500 403.500q2 10 5 11l9 3.500-9 4q-4 2-5 10.500M928.500 403.500q-1 8-5 11l-10 3.500 10 4q4 2 5 10.500" fill="#fff" stroke="#000"/>
          <g fill="none" stroke="#000">
            <path d="M503.500 366V351.500l9 3q3 2 5 10M609.500 366V351.500l-9 4q-3 2-5 9M817.500 366V351.500l9 4q3 2 5 9M891.500 366V351.500l-9 4q-3 2-5 9"/>
            <path d="M682.500 366V351.500l9 4q3 2 5 9M788.500 366V351.500l-9 4q-3 2-5 9M682.500 470V455.500l9 4q3 2 5 9M891.500 470V455.500l-9 4q-3 2-5 9"/>
            <path d="M682 366V352M788 366V352M817 366V352M891 366V352M682 470V455M891 470V455" stroke-width="2"/>
          </g>
          <g fill="none" stroke="#000" shape-rendering="crispEdges">
            <path d="M618 288.500h55M618 293.500h55M618 298.500h55M618 303.500h55M618 308.500h55M618 313.500h55M649 318.500h24M649 323.500h24M649 328.500h24M649 332.500h24M649 337.500h24M649 342.500h24M649 347.500h24" stroke-dasharray="4 3"/>
            <path d="M618 323.500h25M618 328.500h25M618 332.500h25M618 337.500h25M618 342.500h25M618 347.500h25M628 318.500h15M630.500 323v24"/>
            <path d="M643 287h5M644 288v25M648 288v59" stroke-width="2" stroke-dasharray="4 2"/>
            <path d="M644 312v36M643 348h6" stroke-width="2"/>
            <path d="M618 488.500h25M618 493.500h25M618 498.500h25M618 503.500h25M618 508.500h25M618 513.500h25"/>
            <path d="M649 488.500h24M649 493.500h24M649 498.500h24M649 503.500h24M649 508.500h24M649 513.500h24M618 518.500h55M618 523.500h55M618 527.500h55M618 532.500h55M618 537.500h55M618 542.500h55M618 547.500h55" stroke-dasharray="4 3"/>
            <path d="M643 548h5M644 514v34M648 488v60" stroke-width="2" stroke-dasharray="4 2"/>
            <path d="M644 488v26M643 488h5" stroke-width="2"/>
          </g>
          <path d="M619 323.500l10-5 2-2 1 3 11-7M619 523.500l10-5 2-2 1 3 11-7" fill="none" stroke="#000"/>
          <g fill="#fff" stroke="#000" shape-rendering="crispEdges">
            <path d="M254.500 228.500h9v8h-9zM373.500 228.500h9v8h-9zM492.500 228.500h9v8h-9zM611.500 228.500h9v8h-9zM671.500 228.500h8v8h-8zM790.500 228.500h8v8h-8zM909.500 228.500h8v8h-8zM254.500 359.500h9v8h-9zM254.500 468.500h9v8h-9zM909.500 359.500h8v8h-8zM909.500 468.500h8v8h-8zM254.500 599.500h9v9h-9zM373.500 599.500h9v9h-9zM492.500 599.500h9v9h-9zM611.500 599.500h9v9h-9zM671.500 599.500h8v9h-8zM790.500 599.500h8v9h-8zM909.500 599.500h8v9h-8z"/>
            <path fill="none" d="M373.500 359.500h9v8h-9zM492.500 359.500h9v8h-9zM611.500 359.500h9v8h-9zM671.500 359.500h8v8h-8zM790.500 359.500h8v8h-8zM373.500 468.500h9v8h-9zM492.500 468.500h9v8h-9zM611.500 468.500h9v8h-9zM671.500 468.500h8v8h-8zM790.500 468.500h8v8h-8z"/>
            <path fill="#9ab594" stroke="none" d="M374 234h8v2h-8zM493 234h5v2h-5zM261 360h2v7h-2zM261 469h2v7h-2zM261 600h2v3h-2zM374 600h8v3h-8zM493 600h8v3h-8zM261 234h2v2h-2z"/>
          </g>
          <path d="M259 233.500H614.500V258.500H676.500M497.500 233V366.500H912M616.500 258V366.500M676.500 258V366.500M676 258.500h1.500V233.500M675 233.500H914M911.500 233V603.500M914 603.500H677.500V577.500M794.500 233V366M853.500 233V366M616.500 577V470.500H912M676.500 470V577.500H614.500V603.500H260.500V232" stroke="#7a00ff" fill="none" shape-rendering="crispEdges"/>
          <g class="rooms" text-anchor="middle">
            <text x="424" y="428">公区面积</text><text x="424" y="436">554.48 m²</text>
            <text x="552" y="303">办公室</text><text x="552" y="312">57.44 m²</text>
            <text x="645" y="270">楼梯</text><text x="645" y="279">25.44 m²</text>
            <text x="739" y="295">办公室</text><text x="739" y="304">57.44 m²</text>
            <text x="825" y="295">储藏室</text><text x="825" y="304">28.84 m²</text>
            <text x="882" y="295">储藏室</text><text x="882" y="304">28.44 m²</text>
            <text x="645" y="562">楼梯</text><text x="645" y="571">25.44 m²</text>
            <text x="799" y="535">会议室</text><text x="799" y="544">114.24 m²</text>
            <text x="625" y="350">上</text>
          </g>
        </svg>
        <div class="mdi">
          <button aria-label="最小化"><svg viewBox="0 0 12 12"><path d="M.5 7.500h11v3H.5z" class="w"/></svg></button>
          <button aria-label="还原"><svg viewBox="0 0 12 12"><path d="M3.500 3V.5h8v8H9M1 3.500h8v8H1zM4 6.500h2v2H4z" class="w"/></svg></button>
          <button aria-label="关闭"><svg viewBox="0 0 12 12"><path d="M1 1h3l2 3 2-3h3L8 6l3 5H8L6 8l-2 3H1l3-5z" class="w"/></svg></button>
        </div>
        <div class="navbar">
          <button class="rnd" aria-label="关闭导航栏"><svg viewBox="0 0 8 8"><circle cx="4" cy="4" r="4" fill="#b4b8ba"/><path d="M2 2l4 4M6 2L2 6" stroke="#fff"/></svg></button>
          <button class="wheel" aria-label="二维控制盘"><svg viewBox="0 0 26 26"><path d="M9 2h9q2 0 2 2v7q0 9-9 9-9-1-9-9 0-7 7-9z" fill="#eceeee" stroke="#a6a9ab" stroke-width="1.500"/><circle cx="11" cy="11" r="4.500" fill="#fff" stroke="#a6a9ab" stroke-width="1.500"/><path d="M8 14l-3 3M14 14l2 2" stroke="#a6a9ab"/><text x="13" y="24" font-size="10" font-weight="bold" fill="#6f9bd1">2D</text></svg><i class="car"></i></button>
          <button class="zoom" aria-label="缩放"><svg viewBox="0 0 18 18"><path d="M2 1h7l4 4v9H2z" fill="#f5f5f5" stroke="#a6a9ab"/><circle cx="12" cy="12" r="3.500" fill="#fff" stroke="#999"/><path d="M14 14l3 3" stroke="#999" stroke-width="2"/></svg><i class="car"></i></button>
          <button class="rnd" aria-label="选项"><svg viewBox="0 0 8 8"><circle cx="4" cy="4" r="3.500" fill="#ddd" stroke="#aaa"/><path d="M2 4h4" stroke="#777"/></svg></button>
        </div>
        <svg class="pointer" viewBox="0 0 12 20"><path d="M1 1v15l3.500-3 3 6 2-1-3-6H11z" fill="#fff" stroke="#222"/></svg>
      </div>
      <div class="vscroll"><svg><use href="#up"/></svg><i></i><b></b><i></i><svg><use href="#down"/></svg></div>
      <div class="vctl">
        <button class="scale">1&nbsp; :&nbsp; 100</button>
        <button aria-label="详细程度"><svg><use href="#v-1"/></svg></button><button aria-label="视觉样式"><svg><use href="#v-2"/></svg></button><button aria-label="日光路径"><svg><use href="#v-sun"/></svg></button><button aria-label="阴影"><svg><use href="#v-shad"/></svg></button><button aria-label="裁剪视图"><svg><use href="#v-crop"/></svg></button><button aria-label="显示裁剪区域"><svg><use href="#v-cropb"/></svg></button><button aria-label="临时隐藏"><svg><use href="#v-glass"/></svg></button><button aria-label="显示隐藏图元"><svg><use href="#v-bulb"/></svg></button><button aria-label="临时视图属性"><svg><use href="#v-film"/></svg></button><button aria-label="显示约束"><svg><use href="#v-lock"/></svg></button>
        <div class="hscroll"><svg><use href="#left"/></svg><i></i><b></b><i></i><svg><use href="#right"/></svg></div>
      </div>
      <div class="corner"></div>
    </section>
  </main>

  <footer class="status">
    <span class="hint">单击可进行选择; 按 Tab 键并单击可选择其他项目; 按 Ctrl 键并单击可将</span>
    <svg><use href="#t-ws"/></svg>
    <select class="ws" aria-label="工作集"><option></option></select>
    <span class="grp"><svg><use href="#t-brush"/></svg>:0</span>
    <span class="grp2"><svg><use href="#t-list"/></svg><svg><use href="#t-img"/></svg></span>
    <select class="model" aria-label="设计选项"><option>主模型</option></select>
    <span class="right"><svg><use href="#t-sel1"/></svg><svg><use href="#t-sel2"/></svg><svg><use href="#t-sel3"/></svg><svg><use href="#t-sel4"/></svg><svg><use href="#t-sel5"/></svg><span class="filter"><svg><use href="#t-funnel"/></svg>:0</span></span>
  </footer>
</div>
</body>
</html>
```
FILE: styles.css
```
* { box-sizing: border-box; }
html, body { height: 100%; }
body {
  margin: 0;
  overflow: hidden;
  background: #e6e6e6;
  color: #222;
  font: 12px/16px "Noto Sans CJK SC", "Noto Sans", sans-serif;
}
button, input, select {
  font: inherit;
  color: inherit;
  margin: 0;
  padding: 0;
  border: 0;
  background: none;
  white-space: nowrap;
}
h2, h3 { margin: 0; font-size: 12px; font-weight: normal; }
svg { display: block; flex: none; }
.defs { position: absolute; width: 0; height: 0; }
.k { fill: none; stroke: #3b4254; }
.k2 { fill: none; stroke: #222; stroke-width: 1.5; }
.w { fill: #fafafa; stroke: #3b4254; }
.car { flex: none; width: 12px; display: flex; justify-content: center; align-items: center; }
.car::before { content: ""; border: 3px solid transparent; border-top: 4px solid #444; border-bottom: 0; }

/* The title row and the status row run past the window's edges. */
.app { display: flex; flex-direction: column; height: calc(100% + 16px); margin-top: -8px; }

/* Title row and tabs */
.top { display: grid; grid-template-columns: 36px minmax(0, 1fr); grid-template-rows: 26px 20px; background: #a1a1a1; flex: none; }
.appbtn {
  grid-row: 1 / 3;
  height: 43px;
  display: flex;
  align-items: center;
  border: 1px solid #222;
  border-left: 0;
  background: linear-gradient(#dcdcdc, #8f8f8f);
}
.logo { width: 24px; height: 34px; }
.appbtn .car { width: 10px; }
.appbtn .car::before { border-width: 5px 4px 0; }
.qat { display: flex; align-items: center; background: #d6d6d6; border-bottom: 1px solid #777; margin-left: 3px; padding-left: 2px; }
.pick { display: flex; width: 209px; height: 100%; background: #fdfdfd; align-items: center; }
.pick input { flex: 1; min-width: 0; padding-left: 4px; outline: 0; }
.pick .car::before { border-width: 5px 4px 0; }
.ic { flex: none; width: 24px; display: flex; justify-content: center; }
.ic svg { width: 16px; height: 16px; }
.sep { flex: none; width: 1px; height: 100%; background: #aaa; margin: 0 3px; }
.bar { width: 14px; margin-right: 2px; flex-direction: column; gap: 2px; }
.bar::before { order: 2; border-width: 5px 4px 0; }
.bar::after { content: ""; width: 8px; height: 1px; background: #333; }
.title {
  flex: 1;
  min-width: 0;
  height: 100%;
  padding-left: 18px;
  background: linear-gradient(90deg, #5cb2e8, #5cb2e8 45%, transparent 60%) 0 100% / 100% 7px no-repeat, #90cdf2;
  border: solid #555;
  border-width: 0 1px;
  color: #111;
  font-size: 15px;
  line-height: 22px;
  white-space: nowrap;
  overflow: hidden;
}
.info { flex: none; display: flex; align-items: center; height: 100%; width: 278px; }
.lt::before { border: 4px solid transparent; border-right-color: #333; border-left: 0; }
.login { flex: 1; text-align: left; padding-left: 2px; }
.wctl { flex: none; width: 118px; height: 100%; background: #8bd0f6; border-left: 1px solid #777; display: flex; align-items: center; padding-left: 34px; gap: 16px; }
.wctl i { width: 9px; height: 2px; background: #222; margin-bottom: 8px; }
.wctl b { flex: 1; height: 12px; background: #7aa3cf; margin-bottom: 3px; }
.tabs { display: flex; padding-left: 4px; padding-top: 2px; }
.tabs button { padding: 0 10px; height: 18px; line-height: 16px; }
.tabs .on { background: #f5f5f5; border-radius: 2px 2px 0 0; }
.tabs .mini { display: flex; align-items: center; padding-left: 16px; gap: 2px; }
.mini span { width: 15px; height: 9px; border: 1px solid #333; border-radius: 3px; background: #eee; display: flex; justify-content: center; align-items: center; }
.mini span::before { content: ""; border: 2px solid transparent; border-bottom: 3px solid #222; border-top: 0; }

/* Ribbon */
.ribbon { display: flex; flex: none; background: linear-gradient(#e2e2e2, #c6c6c8 50%, #a2a2a2); border-bottom: 1px solid #fff; }
.panel { display: flex; flex-direction: column; flex: none; background: #fdfdfd; border-right: 1px solid #b4b4b4; }
.panel .body { height: 76px; padding-top: 3px; display: grid; }
.panel h2 { height: 18px; padding-bottom: 2px; background: #ececee; display: flex; justify-content: center; align-items: center; border-top: 1px solid #ddd; position: relative; gap: 2px; }
.panel h2 .car::before { border-width: 5px 4px 0; }
.big { display: flex; flex-direction: column; align-items: center; line-height: 15px; height: 72px; padding-top: 3px; }
.big svg { width: 30px; height: 30px; margin-bottom: 4px; }
.big.on { border: 1px solid #1c6fc4; background: linear-gradient(#dbeffc, #a9d2f2); padding-top: 2px; }
.big .car { height: 8px; }
.col { display: grid; grid-template-rows: repeat(3, 24px); }
.col button { display: flex; align-items: center; gap: 5px; }
.col svg { width: 16px; height: 16px; }
.off { color: #999; }
.p-sel { width: 46px; }
.p-sel .body { padding-left: 2px; padding-right: 5px; }
.p-dim { width: 271px; }
.p-dim .body { grid-template-columns: 38px 38px 43px 55px 1fr; padding-left: 2px; }
.p-dim .big:nth-child(3) { padding-right: 5px; }
.p-det { width: 157px; }
.p-det .body { grid-template-columns: 70px 1fr; padding-left: 7px; }
.p-txt { width: 92px; }
.p-txt .body { padding-left: 7px; }
.p-tag { width: 413px; }
.p-tag .body { grid-template-columns: 40px 44px 81px 81px 85px 1fr; padding-left: 3px; }
.p-tag .big:nth-child(2) { padding-right: 4px; }
.p-tag .note { border-left: 1px solid #ccc; padding-right: 0; }
.p-col { width: 111px; }
.p-col .body { padding-left: 7px; }
.p-sym { width: 92px; }
.p-sym .body { grid-template-columns: 40px 24px 24px; }
.p-sym .col button { justify-content: center; }
.launch { position: absolute; right: 5px; bottom: 5px; width: 6px; height: 6px; }
.options { flex: none; height: 26px; background: #e6e6e6; border-bottom: 2px solid #666; }

/* Work area */
.work { flex: 1; min-height: 0; display: flex; background: #f0f0f0; }
.props { flex: none; width: 221px; padding-right: 5px; display: flex; flex-direction: column; border-right: 1px solid #777; background: #f2f2f2; }
.phead { height: 18px; flex: none; display: flex; justify-content: space-between; align-items: center; background: #c3d1e0; padding-right: 6px; }
.phead svg { width: 8px; height: 8px; }
.type { flex: none; height: 72px; display: flex; align-items: center; border: 1px solid #bbb; border-top: 2px solid #666; border-left: 0; margin: 2px 1px 0 0; background: linear-gradient(#fff, #e9eef2); text-align: left; }
.thumb { width: 66px; height: 66px; border: 1px solid #ccc; display: grid; place-items: center; background: #fcfcfc; }
.thumb svg { width: 30px; height: 30px; }
.tname { flex: 1; padding-left: 4px; color: #333; }
.type .car::before { border-width: 5px 4px 0; }
.inst { flex: none; display: flex; align-items: center; height: 24px; gap: 6px; }
.inst select {
  width: 131px;
  height: 22px;
  padding-left: 1px;
  border: 1px solid #aaa;
  appearance: none;
  background: #e4e4e4 url("data:image/svg+xml,%3Csvg xmlns='http://www.w3.org/2000/svg' width='8' height='6'%3E%3Cpath d='M0 1l4 4 4-4' fill='none' stroke='%23555' stroke-width='1.600'/%3E%3C/svg%3E") right 4px center no-repeat;
}
.etype { display: flex; gap: 5px; align-items: center; color: #111; }
.etype svg { width: 16px; height: 16px; }
.plist { flex: 1; min-height: 0; display: flex; }
.ptab { width: 197px; overflow: hidden; color: #111; }
.ptab h3 { height: 18px; display: flex; align-items: center; justify-content: space-between; background: #dadad8; padding-right: 4px; }
.ptab h3 svg { width: 10px; height: 10px; }
.ptab table { width: 197px; border-collapse: separate; border-spacing: 0; table-layout: fixed; background: #fdfdfd; }
.ptab th, .ptab td { height: 18px; padding: 0; border: 1px dotted #777; border-width: 0 1px 1px 0; white-space: nowrap; overflow: hidden; font-weight: normal; text-align: left; line-height: 16px; }
.ptab th { width: 97px; padding-left: 5px; }
.ptab td { padding-left: 2px; }
.ptab td button { display: block; width: 97px; height: 16px; line-height: 13px; margin-left: -1px; border: 1px solid #aaa; border-bottom: 2px solid #999; border-right: 2px solid #999; background: #e4e4e6; }
.ptab td input[type="text"] { display: block; width: 99px; height: 17px; margin-left: -2px; padding-left: 1px; border: 1px solid #000; line-height: 14px; background: #fdfdfd; }
.ptab td input[type="checkbox"] { appearance: none; display: block; width: 13px; height: 13px; border: 1px solid #555; background: #fff; margin-left: 1px; }
.ptab .off { color: #888; }
.vbar { width: 15px; margin-left: 1px; display: flex; flex-direction: column; align-items: center; padding: 4px 0; }
.vbar svg, .vscroll svg, .hscroll svg { width: 10px; height: 10px; }
.vbar .half { height: 4px; }
.vbar b { width: 14px; height: 195px; background: #cacacd; margin-bottom: auto; }
.pfoot { flex: none; height: 26px; display: flex; align-items: center; justify-content: space-between; padding-right: 4px; border-bottom: 1px solid #aaa; }
.pfoot a { color: #0a66c8; }
.pfoot button { width: 73px; height: 19px; border: 1px solid #ccc; background: #eee; color: #888; line-height: 16px; }

.view { flex: 1; min-width: 0; display: grid; grid-template-columns: minmax(0, 1fr) 15px; grid-template-rows: minmax(0, 1fr) 19px; }
.canvas { position: relative; background: #fefefe; overflow: hidden; }
.plan { width: 720px; height: 470px; }
.rooms { font: bold 6px "Liberation Sans", "Noto Sans CJK SC", sans-serif; fill: #000; }
.mdi { position: absolute; top: 9px; right: 2px; display: flex; gap: 6px; }
.mdi svg { width: 12px; height: 12px; }
.navbar { position: absolute; top: 29px; right: 0; width: 35px; height: 118px; border: 2px solid #b9bdbf; border-radius: 6px; background: #eef3f3; display: flex; flex-direction: column; align-items: center; padding: 2px; }
.navbar .rnd { align-self: flex-end; }
.rnd svg { width: 8px; height: 8px; }
.navbar .car { width: auto; height: 8px; opacity: 0.6; }
.wheel { padding-top: 9px; border-bottom: 1px solid #bbb; padding-bottom: 3px; }
.wheel svg { width: 26px; height: 26px; margin-bottom: 2px; overflow: visible; }
.zoom { display: flex; flex-direction: column; align-items: center; gap: 6px; padding-top: 8px; flex: 1; }
.zoom svg { width: 18px; height: 18px; }
.pointer { position: absolute; top: 21px; right: 30px; width: 12px; height: 20px; }
.vscroll { background: #f1f1f1; display: flex; flex-direction: column; align-items: center; padding: 5px 0 2px; }
.vscroll i, .hscroll i { flex: 1; }
.vscroll b { width: 13px; height: 16px; background: #c8c8cb; }
.vctl { display: flex; align-items: center; background: #f0f0f1; padding-left: 22px; min-width: 0; }
.vctl button { width: 21px; display: flex; justify-content: center; flex: none; }
.vctl button svg { width: 16px; height: 16px; }
.vctl .scale { width: 54px; justify-content: flex-start; }
.hscroll { flex: 1; display: flex; align-items: center; padding-left: 5px; }
.hscroll b { width: 17px; height: 15px; background: #c8c8cb; }
.corner { background: #f0f0f1; }

/* Status row */
.status { flex: none; height: 26px; border-top: 2px solid #777; background: #e0e0e0; display: flex; align-items: center; color: #111; }
.status svg { width: 16px; height: 16px; }
.hint { width: 367px; height: 24px; line-height: 22px; overflow: hidden; white-space: nowrap; border-right: 1px solid #bbb; margin-right: 6px; }
.status select { height: 20px; border: 1px solid #bbb; background: #fdfdfd; color: #888; }
.ws { width: 206px; margin-left: 7px; }
.grp { display: flex; gap: 4px; margin-left: 8px; width: 53px; }
.grp2 { display: flex; gap: 10px; }
.model { width: 157px; margin-left: 6px; }
.right { margin-left: auto; display: flex; gap: 10px; padding-right: 80px; }
.filter { display: flex; }
```
